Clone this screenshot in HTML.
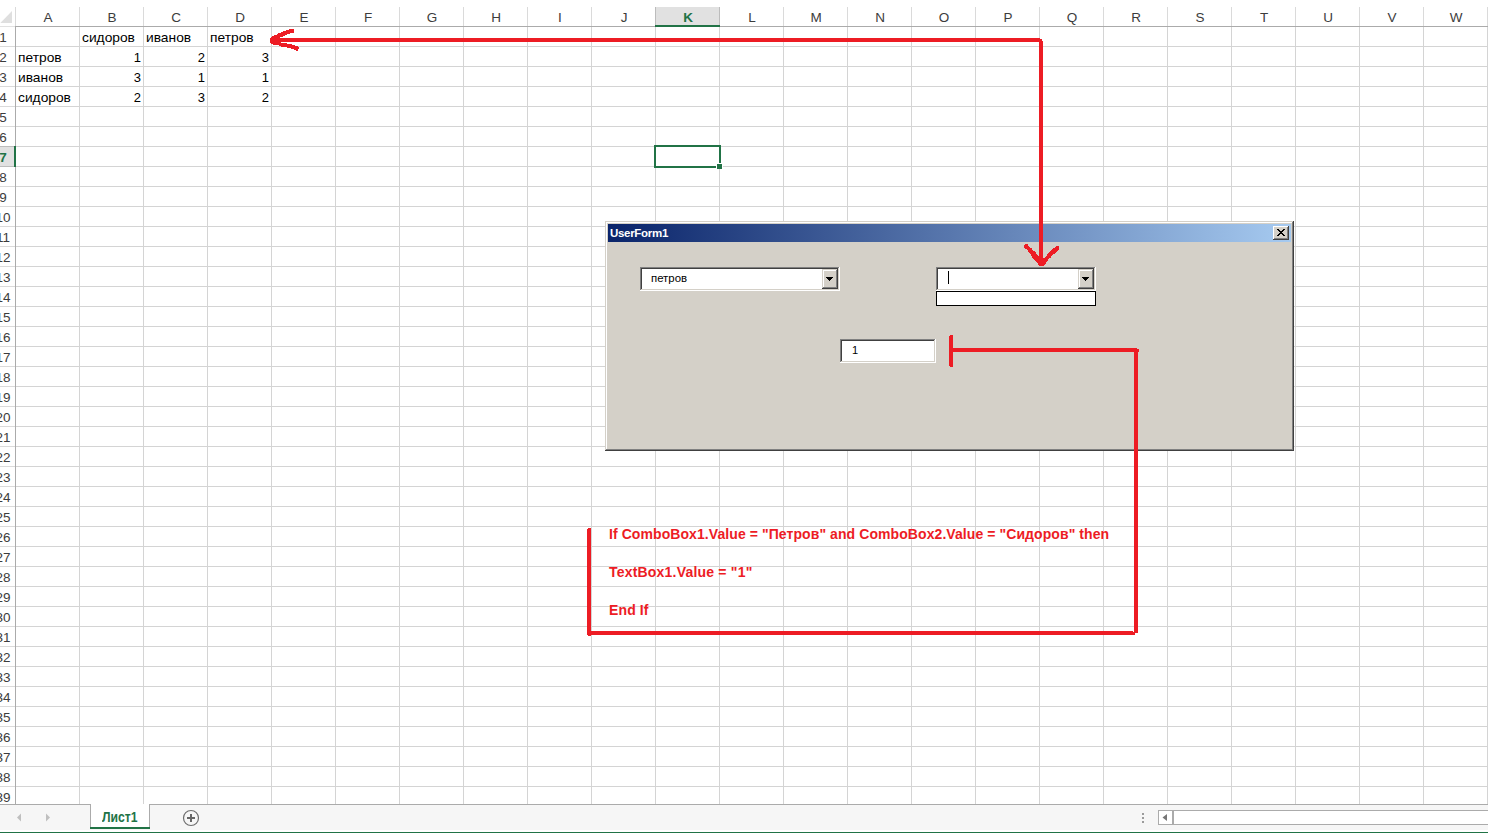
<!DOCTYPE html><html><head><meta charset="utf-8"><style>
html,body{margin:0;padding:0}
body{width:1488px;height:833px;overflow:hidden;position:relative;background:#fff;font-family:"Liberation Sans",sans-serif}
.a{position:absolute}
.t{position:absolute;white-space:pre;line-height:1}
.ch{position:absolute;top:8px;height:19px;width:64px;text-align:center;font-size:13.5px;color:#3c3c3c;line-height:19px}
.rh{position:absolute;left:-11px;width:26px;text-align:center;font-size:13.5px;color:#262626;line-height:20px;height:20px}
.c{position:absolute;font-size:13px;color:#000;white-space:pre;line-height:20px;height:20px}
</style></head><body>
<div class="a" style="left:655px;top:7px;width:64px;height:19px;background:#e1e1e1;"></div>
<div class="a" style="left:79px;top:7px;width:1px;height:19px;background:#dadada;"></div>
<div class="a" style="left:143px;top:7px;width:1px;height:19px;background:#dadada;"></div>
<div class="a" style="left:207px;top:7px;width:1px;height:19px;background:#dadada;"></div>
<div class="a" style="left:271px;top:7px;width:1px;height:19px;background:#dadada;"></div>
<div class="a" style="left:335px;top:7px;width:1px;height:19px;background:#dadada;"></div>
<div class="a" style="left:399px;top:7px;width:1px;height:19px;background:#dadada;"></div>
<div class="a" style="left:463px;top:7px;width:1px;height:19px;background:#dadada;"></div>
<div class="a" style="left:527px;top:7px;width:1px;height:19px;background:#dadada;"></div>
<div class="a" style="left:591px;top:7px;width:1px;height:19px;background:#dadada;"></div>
<div class="a" style="left:655px;top:7px;width:1px;height:19px;background:#bcbcbc;"></div>
<div class="a" style="left:719px;top:7px;width:1px;height:19px;background:#bcbcbc;"></div>
<div class="a" style="left:783px;top:7px;width:1px;height:19px;background:#dadada;"></div>
<div class="a" style="left:847px;top:7px;width:1px;height:19px;background:#dadada;"></div>
<div class="a" style="left:911px;top:7px;width:1px;height:19px;background:#dadada;"></div>
<div class="a" style="left:975px;top:7px;width:1px;height:19px;background:#dadada;"></div>
<div class="a" style="left:1039px;top:7px;width:1px;height:19px;background:#dadada;"></div>
<div class="a" style="left:1103px;top:7px;width:1px;height:19px;background:#dadada;"></div>
<div class="a" style="left:1167px;top:7px;width:1px;height:19px;background:#dadada;"></div>
<div class="a" style="left:1231px;top:7px;width:1px;height:19px;background:#dadada;"></div>
<div class="a" style="left:1295px;top:7px;width:1px;height:19px;background:#dadada;"></div>
<div class="a" style="left:1359px;top:7px;width:1px;height:19px;background:#dadada;"></div>
<div class="a" style="left:1423px;top:7px;width:1px;height:19px;background:#dadada;"></div>
<div class="a" style="left:1487px;top:7px;width:1px;height:19px;background:#dadada;"></div>
<div class="ch" style="left:16px;color:#3c3c3c">A</div>
<div class="ch" style="left:80px;color:#3c3c3c">B</div>
<div class="ch" style="left:144px;color:#3c3c3c">C</div>
<div class="ch" style="left:208px;color:#3c3c3c">D</div>
<div class="ch" style="left:272px;color:#3c3c3c">E</div>
<div class="ch" style="left:336px;color:#3c3c3c">F</div>
<div class="ch" style="left:400px;color:#3c3c3c">G</div>
<div class="ch" style="left:464px;color:#3c3c3c">H</div>
<div class="ch" style="left:528px;color:#3c3c3c">I</div>
<div class="ch" style="left:592px;color:#3c3c3c">J</div>
<div class="ch" style="left:656px;color:#217346;font-weight:bold">K</div>
<div class="ch" style="left:720px;color:#3c3c3c">L</div>
<div class="ch" style="left:784px;color:#3c3c3c">M</div>
<div class="ch" style="left:848px;color:#3c3c3c">N</div>
<div class="ch" style="left:912px;color:#3c3c3c">O</div>
<div class="ch" style="left:976px;color:#3c3c3c">P</div>
<div class="ch" style="left:1040px;color:#3c3c3c">Q</div>
<div class="ch" style="left:1104px;color:#3c3c3c">R</div>
<div class="ch" style="left:1168px;color:#3c3c3c">S</div>
<div class="ch" style="left:1232px;color:#3c3c3c">T</div>
<div class="ch" style="left:1296px;color:#3c3c3c">U</div>
<div class="ch" style="left:1360px;color:#3c3c3c">V</div>
<div class="ch" style="left:1424px;color:#3c3c3c">W</div>
<div class="a" style="left:0px;top:26px;width:15px;height:1px;background:#e1e1e1;"></div>
<div class="a" style="left:15px;top:26px;width:1473px;height:1px;background:#ababab;"></div>
<div class="a" style="left:655px;top:25px;width:65px;height:2px;background:#217346;"></div>
<svg class="a" style="left:0;top:0" width="15" height="26"><polygon points="0.3,23 12,11 12,23" fill="#dfdfdf"/></svg>
<div class="a" style="left:0px;top:147px;width:14px;height:19px;background:#e1e1e1;"></div>
<div class="a" style="left:0px;top:46px;width:15px;height:1px;background:#dadada;"></div>
<div class="a" style="left:0px;top:66px;width:15px;height:1px;background:#dadada;"></div>
<div class="a" style="left:0px;top:86px;width:15px;height:1px;background:#dadada;"></div>
<div class="a" style="left:0px;top:106px;width:15px;height:1px;background:#dadada;"></div>
<div class="a" style="left:0px;top:126px;width:15px;height:1px;background:#dadada;"></div>
<div class="a" style="left:0px;top:146px;width:15px;height:1px;background:#bcbcbc;"></div>
<div class="a" style="left:0px;top:166px;width:15px;height:1px;background:#bcbcbc;"></div>
<div class="a" style="left:0px;top:186px;width:15px;height:1px;background:#dadada;"></div>
<div class="a" style="left:0px;top:206px;width:15px;height:1px;background:#dadada;"></div>
<div class="a" style="left:0px;top:226px;width:15px;height:1px;background:#dadada;"></div>
<div class="a" style="left:0px;top:246px;width:15px;height:1px;background:#dadada;"></div>
<div class="a" style="left:0px;top:266px;width:15px;height:1px;background:#dadada;"></div>
<div class="a" style="left:0px;top:286px;width:15px;height:1px;background:#dadada;"></div>
<div class="a" style="left:0px;top:306px;width:15px;height:1px;background:#dadada;"></div>
<div class="a" style="left:0px;top:326px;width:15px;height:1px;background:#dadada;"></div>
<div class="a" style="left:0px;top:346px;width:15px;height:1px;background:#dadada;"></div>
<div class="a" style="left:0px;top:366px;width:15px;height:1px;background:#dadada;"></div>
<div class="a" style="left:0px;top:386px;width:15px;height:1px;background:#dadada;"></div>
<div class="a" style="left:0px;top:406px;width:15px;height:1px;background:#dadada;"></div>
<div class="a" style="left:0px;top:426px;width:15px;height:1px;background:#dadada;"></div>
<div class="a" style="left:0px;top:446px;width:15px;height:1px;background:#dadada;"></div>
<div class="a" style="left:0px;top:466px;width:15px;height:1px;background:#dadada;"></div>
<div class="a" style="left:0px;top:486px;width:15px;height:1px;background:#dadada;"></div>
<div class="a" style="left:0px;top:506px;width:15px;height:1px;background:#dadada;"></div>
<div class="a" style="left:0px;top:526px;width:15px;height:1px;background:#dadada;"></div>
<div class="a" style="left:0px;top:546px;width:15px;height:1px;background:#dadada;"></div>
<div class="a" style="left:0px;top:566px;width:15px;height:1px;background:#dadada;"></div>
<div class="a" style="left:0px;top:586px;width:15px;height:1px;background:#dadada;"></div>
<div class="a" style="left:0px;top:606px;width:15px;height:1px;background:#dadada;"></div>
<div class="a" style="left:0px;top:626px;width:15px;height:1px;background:#dadada;"></div>
<div class="a" style="left:0px;top:646px;width:15px;height:1px;background:#dadada;"></div>
<div class="a" style="left:0px;top:666px;width:15px;height:1px;background:#dadada;"></div>
<div class="a" style="left:0px;top:686px;width:15px;height:1px;background:#dadada;"></div>
<div class="a" style="left:0px;top:706px;width:15px;height:1px;background:#dadada;"></div>
<div class="a" style="left:0px;top:726px;width:15px;height:1px;background:#dadada;"></div>
<div class="a" style="left:0px;top:746px;width:15px;height:1px;background:#dadada;"></div>
<div class="a" style="left:0px;top:766px;width:15px;height:1px;background:#dadada;"></div>
<div class="a" style="left:0px;top:786px;width:15px;height:1px;background:#dadada;"></div>
<div class="a" style="left:0px;top:806px;width:15px;height:1px;background:#dadada;"></div>
<div class="a" style="left:15px;top:7px;width:1px;height:19px;background:#dadada;"></div>
<div class="a" style="left:15px;top:26px;width:1px;height:778px;background:#ababab;"></div>
<div class="a" style="left:14px;top:146px;width:2px;height:21px;background:#217346;"></div>
<div class="rh" style="left:-10px;top:28px;color:#3c3c3c">1</div>
<div class="rh" style="left:-10px;top:48px;color:#3c3c3c">2</div>
<div class="rh" style="left:-10px;top:68px;color:#3c3c3c">3</div>
<div class="rh" style="left:-10px;top:88px;color:#3c3c3c">4</div>
<div class="rh" style="left:-10px;top:108px;color:#3c3c3c">5</div>
<div class="rh" style="left:-10px;top:128px;color:#3c3c3c">6</div>
<div class="rh" style="left:-10px;top:148px;color:#217346;font-weight:bold">7</div>
<div class="rh" style="left:-10px;top:168px;color:#3c3c3c">8</div>
<div class="rh" style="left:-10px;top:188px;color:#3c3c3c">9</div>
<div class="rh" style="left:-10px;top:208px;color:#3c3c3c">10</div>
<div class="rh" style="left:-10px;top:228px;color:#3c3c3c">11</div>
<div class="rh" style="left:-10px;top:248px;color:#3c3c3c">12</div>
<div class="rh" style="left:-10px;top:268px;color:#3c3c3c">13</div>
<div class="rh" style="left:-10px;top:288px;color:#3c3c3c">14</div>
<div class="rh" style="left:-10px;top:308px;color:#3c3c3c">15</div>
<div class="rh" style="left:-10px;top:328px;color:#3c3c3c">16</div>
<div class="rh" style="left:-10px;top:348px;color:#3c3c3c">17</div>
<div class="rh" style="left:-10px;top:368px;color:#3c3c3c">18</div>
<div class="rh" style="left:-10px;top:388px;color:#3c3c3c">19</div>
<div class="rh" style="left:-10px;top:408px;color:#3c3c3c">20</div>
<div class="rh" style="left:-10px;top:428px;color:#3c3c3c">21</div>
<div class="rh" style="left:-10px;top:448px;color:#3c3c3c">22</div>
<div class="rh" style="left:-10px;top:468px;color:#3c3c3c">23</div>
<div class="rh" style="left:-10px;top:488px;color:#3c3c3c">24</div>
<div class="rh" style="left:-10px;top:508px;color:#3c3c3c">25</div>
<div class="rh" style="left:-10px;top:528px;color:#3c3c3c">26</div>
<div class="rh" style="left:-10px;top:548px;color:#3c3c3c">27</div>
<div class="rh" style="left:-10px;top:568px;color:#3c3c3c">28</div>
<div class="rh" style="left:-10px;top:588px;color:#3c3c3c">29</div>
<div class="rh" style="left:-10px;top:608px;color:#3c3c3c">30</div>
<div class="rh" style="left:-10px;top:628px;color:#3c3c3c">31</div>
<div class="rh" style="left:-10px;top:648px;color:#3c3c3c">32</div>
<div class="rh" style="left:-10px;top:668px;color:#3c3c3c">33</div>
<div class="rh" style="left:-10px;top:688px;color:#3c3c3c">34</div>
<div class="rh" style="left:-10px;top:708px;color:#3c3c3c">35</div>
<div class="rh" style="left:-10px;top:728px;color:#3c3c3c">36</div>
<div class="rh" style="left:-10px;top:748px;color:#3c3c3c">37</div>
<div class="rh" style="left:-10px;top:768px;color:#3c3c3c">38</div>
<div class="rh" style="left:-10px;top:788px;color:#3c3c3c">39</div>
<div class="a" style="left:79px;top:27px;width:1px;height:777px;background:#d4d4d4;"></div>
<div class="a" style="left:143px;top:27px;width:1px;height:777px;background:#d4d4d4;"></div>
<div class="a" style="left:207px;top:27px;width:1px;height:777px;background:#d4d4d4;"></div>
<div class="a" style="left:271px;top:27px;width:1px;height:777px;background:#d4d4d4;"></div>
<div class="a" style="left:335px;top:27px;width:1px;height:777px;background:#d4d4d4;"></div>
<div class="a" style="left:399px;top:27px;width:1px;height:777px;background:#d4d4d4;"></div>
<div class="a" style="left:463px;top:27px;width:1px;height:777px;background:#d4d4d4;"></div>
<div class="a" style="left:527px;top:27px;width:1px;height:777px;background:#d4d4d4;"></div>
<div class="a" style="left:591px;top:27px;width:1px;height:777px;background:#d4d4d4;"></div>
<div class="a" style="left:655px;top:27px;width:1px;height:777px;background:#d4d4d4;"></div>
<div class="a" style="left:719px;top:27px;width:1px;height:777px;background:#d4d4d4;"></div>
<div class="a" style="left:783px;top:27px;width:1px;height:777px;background:#d4d4d4;"></div>
<div class="a" style="left:847px;top:27px;width:1px;height:777px;background:#d4d4d4;"></div>
<div class="a" style="left:911px;top:27px;width:1px;height:777px;background:#d4d4d4;"></div>
<div class="a" style="left:975px;top:27px;width:1px;height:777px;background:#d4d4d4;"></div>
<div class="a" style="left:1039px;top:27px;width:1px;height:777px;background:#d4d4d4;"></div>
<div class="a" style="left:1103px;top:27px;width:1px;height:777px;background:#d4d4d4;"></div>
<div class="a" style="left:1167px;top:27px;width:1px;height:777px;background:#d4d4d4;"></div>
<div class="a" style="left:1231px;top:27px;width:1px;height:777px;background:#d4d4d4;"></div>
<div class="a" style="left:1295px;top:27px;width:1px;height:777px;background:#d4d4d4;"></div>
<div class="a" style="left:1359px;top:27px;width:1px;height:777px;background:#d4d4d4;"></div>
<div class="a" style="left:1423px;top:27px;width:1px;height:777px;background:#d4d4d4;"></div>
<div class="a" style="left:1487px;top:27px;width:1px;height:777px;background:#d4d4d4;"></div>
<div class="a" style="left:16px;top:46px;width:1472px;height:1px;background:#d4d4d4;"></div>
<div class="a" style="left:16px;top:66px;width:1472px;height:1px;background:#d4d4d4;"></div>
<div class="a" style="left:16px;top:86px;width:1472px;height:1px;background:#d4d4d4;"></div>
<div class="a" style="left:16px;top:106px;width:1472px;height:1px;background:#d4d4d4;"></div>
<div class="a" style="left:16px;top:126px;width:1472px;height:1px;background:#d4d4d4;"></div>
<div class="a" style="left:16px;top:146px;width:1472px;height:1px;background:#d4d4d4;"></div>
<div class="a" style="left:16px;top:166px;width:1472px;height:1px;background:#d4d4d4;"></div>
<div class="a" style="left:16px;top:186px;width:1472px;height:1px;background:#d4d4d4;"></div>
<div class="a" style="left:16px;top:206px;width:1472px;height:1px;background:#d4d4d4;"></div>
<div class="a" style="left:16px;top:226px;width:1472px;height:1px;background:#d4d4d4;"></div>
<div class="a" style="left:16px;top:246px;width:1472px;height:1px;background:#d4d4d4;"></div>
<div class="a" style="left:16px;top:266px;width:1472px;height:1px;background:#d4d4d4;"></div>
<div class="a" style="left:16px;top:286px;width:1472px;height:1px;background:#d4d4d4;"></div>
<div class="a" style="left:16px;top:306px;width:1472px;height:1px;background:#d4d4d4;"></div>
<div class="a" style="left:16px;top:326px;width:1472px;height:1px;background:#d4d4d4;"></div>
<div class="a" style="left:16px;top:346px;width:1472px;height:1px;background:#d4d4d4;"></div>
<div class="a" style="left:16px;top:366px;width:1472px;height:1px;background:#d4d4d4;"></div>
<div class="a" style="left:16px;top:386px;width:1472px;height:1px;background:#d4d4d4;"></div>
<div class="a" style="left:16px;top:406px;width:1472px;height:1px;background:#d4d4d4;"></div>
<div class="a" style="left:16px;top:426px;width:1472px;height:1px;background:#d4d4d4;"></div>
<div class="a" style="left:16px;top:446px;width:1472px;height:1px;background:#d4d4d4;"></div>
<div class="a" style="left:16px;top:466px;width:1472px;height:1px;background:#d4d4d4;"></div>
<div class="a" style="left:16px;top:486px;width:1472px;height:1px;background:#d4d4d4;"></div>
<div class="a" style="left:16px;top:506px;width:1472px;height:1px;background:#d4d4d4;"></div>
<div class="a" style="left:16px;top:526px;width:1472px;height:1px;background:#d4d4d4;"></div>
<div class="a" style="left:16px;top:546px;width:1472px;height:1px;background:#d4d4d4;"></div>
<div class="a" style="left:16px;top:566px;width:1472px;height:1px;background:#d4d4d4;"></div>
<div class="a" style="left:16px;top:586px;width:1472px;height:1px;background:#d4d4d4;"></div>
<div class="a" style="left:16px;top:606px;width:1472px;height:1px;background:#d4d4d4;"></div>
<div class="a" style="left:16px;top:626px;width:1472px;height:1px;background:#d4d4d4;"></div>
<div class="a" style="left:16px;top:646px;width:1472px;height:1px;background:#d4d4d4;"></div>
<div class="a" style="left:16px;top:666px;width:1472px;height:1px;background:#d4d4d4;"></div>
<div class="a" style="left:16px;top:686px;width:1472px;height:1px;background:#d4d4d4;"></div>
<div class="a" style="left:16px;top:706px;width:1472px;height:1px;background:#d4d4d4;"></div>
<div class="a" style="left:16px;top:726px;width:1472px;height:1px;background:#d4d4d4;"></div>
<div class="a" style="left:16px;top:746px;width:1472px;height:1px;background:#d4d4d4;"></div>
<div class="a" style="left:16px;top:766px;width:1472px;height:1px;background:#d4d4d4;"></div>
<div class="a" style="left:16px;top:786px;width:1472px;height:1px;background:#d4d4d4;"></div>
<div class="c" style="left:82px;top:28px;transform:scaleX(1.06);transform-origin:0 0">сидоров</div>
<div class="c" style="left:146px;top:28px;transform:scaleX(1.06);transform-origin:0 0">иванов</div>
<div class="c" style="left:210px;top:28px;transform:scaleX(1.06);transform-origin:0 0">петров</div>
<div class="c" style="left:18px;top:48px;transform:scaleX(1.06);transform-origin:0 0">петров</div>
<div class="c" style="left:79px;width:62px;text-align:right;top:48px">1</div>
<div class="c" style="left:143px;width:62px;text-align:right;top:48px">2</div>
<div class="c" style="left:207px;width:62px;text-align:right;top:48px">3</div>
<div class="c" style="left:18px;top:68px;transform:scaleX(1.06);transform-origin:0 0">иванов</div>
<div class="c" style="left:79px;width:62px;text-align:right;top:68px">3</div>
<div class="c" style="left:143px;width:62px;text-align:right;top:68px">1</div>
<div class="c" style="left:207px;width:62px;text-align:right;top:68px">1</div>
<div class="c" style="left:18px;top:88px;transform:scaleX(1.06);transform-origin:0 0">сидоров</div>
<div class="c" style="left:79px;width:62px;text-align:right;top:88px">2</div>
<div class="c" style="left:143px;width:62px;text-align:right;top:88px">3</div>
<div class="c" style="left:207px;width:62px;text-align:right;top:88px">2</div>
<div class="a" style="left:654px;top:145px;width:67px;height:2px;background:#217346;"></div>
<div class="a" style="left:654px;top:145px;width:2px;height:23px;background:#217346;"></div>
<div class="a" style="left:654px;top:166px;width:62px;height:2px;background:#217346;"></div>
<div class="a" style="left:719px;top:145px;width:2px;height:18px;background:#217346;"></div>
<div class="a" style="left:716px;top:163px;width:7px;height:6px;background:#fff;"></div>
<div class="a" style="left:717px;top:164px;width:5px;height:5px;background:#217346;"></div>
<div class="a" style="left:605px;top:221px;width:689px;height:230px;background:#404040;"></div>
<div class="a" style="left:605px;top:221px;width:688px;height:229px;background:#d4d0c8;"></div>
<div class="a" style="left:606px;top:222px;width:687px;height:228px;background:#808080;"></div>
<div class="a" style="left:606px;top:222px;width:686px;height:227px;background:#ffffff;"></div>
<div class="a" style="left:607px;top:223px;width:685px;height:226px;background:#d4d0c8;"></div>
<div class="a" style="left:608px;top:224px;width:683px;height:18px;background:linear-gradient(to right,#0a246a,#a6caf0);"></div>
<div class="t" style="left:610px;top:228px;font-size:11.5px;font-weight:bold;color:#fff;letter-spacing:-0.3px">UserForm1</div>
<div class="a" style="left:1273px;top:226px;width:16px;height:14px;background:#404040;"></div>
<div class="a" style="left:1273px;top:226px;width:15px;height:13px;background:#ffffff;"></div>
<div class="a" style="left:1274px;top:227px;width:14px;height:12px;background:#808080;"></div>
<div class="a" style="left:1274px;top:227px;width:13px;height:11px;background:#d4d0c8;"></div>
<div class="a" style="left:1277px;top:229px;width:1px;height:1px;background:#000;"></div>
<div class="a" style="left:1278px;top:229px;width:1px;height:1px;background:#000;"></div>
<div class="a" style="left:1283px;top:229px;width:1px;height:1px;background:#000;"></div>
<div class="a" style="left:1284px;top:229px;width:1px;height:1px;background:#000;"></div>
<div class="a" style="left:1278px;top:230px;width:1px;height:1px;background:#000;"></div>
<div class="a" style="left:1279px;top:230px;width:1px;height:1px;background:#000;"></div>
<div class="a" style="left:1282px;top:230px;width:1px;height:1px;background:#000;"></div>
<div class="a" style="left:1283px;top:230px;width:1px;height:1px;background:#000;"></div>
<div class="a" style="left:1279px;top:231px;width:1px;height:1px;background:#000;"></div>
<div class="a" style="left:1280px;top:231px;width:1px;height:1px;background:#000;"></div>
<div class="a" style="left:1281px;top:231px;width:1px;height:1px;background:#000;"></div>
<div class="a" style="left:1282px;top:231px;width:1px;height:1px;background:#000;"></div>
<div class="a" style="left:1280px;top:232px;width:1px;height:1px;background:#000;"></div>
<div class="a" style="left:1281px;top:232px;width:1px;height:1px;background:#000;"></div>
<div class="a" style="left:1279px;top:233px;width:1px;height:1px;background:#000;"></div>
<div class="a" style="left:1280px;top:233px;width:1px;height:1px;background:#000;"></div>
<div class="a" style="left:1281px;top:233px;width:1px;height:1px;background:#000;"></div>
<div class="a" style="left:1282px;top:233px;width:1px;height:1px;background:#000;"></div>
<div class="a" style="left:1278px;top:234px;width:1px;height:1px;background:#000;"></div>
<div class="a" style="left:1279px;top:234px;width:1px;height:1px;background:#000;"></div>
<div class="a" style="left:1282px;top:234px;width:1px;height:1px;background:#000;"></div>
<div class="a" style="left:1283px;top:234px;width:1px;height:1px;background:#000;"></div>
<div class="a" style="left:1277px;top:235px;width:1px;height:1px;background:#000;"></div>
<div class="a" style="left:1278px;top:235px;width:1px;height:1px;background:#000;"></div>
<div class="a" style="left:1283px;top:235px;width:1px;height:1px;background:#000;"></div>
<div class="a" style="left:1284px;top:235px;width:1px;height:1px;background:#000;"></div>
<div class="a" style="left:640px;top:267px;width:200px;height:24px;background:#ffffff;"></div>
<div class="a" style="left:640px;top:267px;width:199px;height:23px;background:#808080;"></div>
<div class="a" style="left:641px;top:268px;width:198px;height:22px;background:#d4d0c8;"></div>
<div class="a" style="left:641px;top:268px;width:197px;height:21px;background:#404040;"></div>
<div class="a" style="left:642px;top:269px;width:196px;height:20px;background:#ffffff;"></div>
<div class="a" style="left:822px;top:269px;width:16px;height:20px;background:#404040;"></div>
<div class="a" style="left:822px;top:269px;width:15px;height:19px;background:#d4d0c8;"></div>
<div class="a" style="left:823px;top:270px;width:14px;height:18px;background:#808080;"></div>
<div class="a" style="left:823px;top:270px;width:13px;height:17px;background:#ffffff;"></div>
<div class="a" style="left:824px;top:271px;width:12px;height:16px;background:#d4d0c8;"></div>
<div class="a" style="left:826px;top:277px;width:7px;height:1px;background:#000;"></div>
<div class="a" style="left:827px;top:278px;width:5px;height:1px;background:#000;"></div>
<div class="a" style="left:828px;top:279px;width:3px;height:1px;background:#000;"></div>
<div class="a" style="left:829px;top:280px;width:1px;height:1px;background:#000;"></div>
<div class="t" style="left:651px;top:273px;font-size:11.4px;color:#000">петров</div>
<div class="a" style="left:936px;top:267px;width:160px;height:24px;background:#ffffff;"></div>
<div class="a" style="left:936px;top:267px;width:159px;height:23px;background:#808080;"></div>
<div class="a" style="left:937px;top:268px;width:158px;height:22px;background:#d4d0c8;"></div>
<div class="a" style="left:937px;top:268px;width:157px;height:21px;background:#404040;"></div>
<div class="a" style="left:938px;top:269px;width:156px;height:20px;background:#ffffff;"></div>
<div class="a" style="left:1078px;top:269px;width:16px;height:20px;background:#404040;"></div>
<div class="a" style="left:1078px;top:269px;width:15px;height:19px;background:#d4d0c8;"></div>
<div class="a" style="left:1079px;top:270px;width:14px;height:18px;background:#808080;"></div>
<div class="a" style="left:1079px;top:270px;width:13px;height:17px;background:#ffffff;"></div>
<div class="a" style="left:1080px;top:271px;width:12px;height:16px;background:#d4d0c8;"></div>
<div class="a" style="left:1082px;top:277px;width:7px;height:1px;background:#000;"></div>
<div class="a" style="left:1083px;top:278px;width:5px;height:1px;background:#000;"></div>
<div class="a" style="left:1084px;top:279px;width:3px;height:1px;background:#000;"></div>
<div class="a" style="left:1085px;top:280px;width:1px;height:1px;background:#000;"></div>
<div class="a" style="left:948px;top:271px;width:1px;height:13px;background:#000;"></div>
<div class="a" style="left:936px;top:291px;width:160px;height:15px;background:#000;"></div>
<div class="a" style="left:937px;top:292px;width:158px;height:13px;background:#fff;"></div>
<div class="a" style="left:840px;top:339px;width:96px;height:24px;background:#ffffff;"></div>
<div class="a" style="left:840px;top:339px;width:95px;height:23px;background:#808080;"></div>
<div class="a" style="left:841px;top:340px;width:94px;height:22px;background:#d4d0c8;"></div>
<div class="a" style="left:841px;top:340px;width:93px;height:21px;background:#404040;"></div>
<div class="a" style="left:842px;top:341px;width:92px;height:20px;background:#ffffff;"></div>
<div class="t" style="left:852px;top:345px;font-size:11px;color:#000">1</div>
<div class="t" style="left:609px;top:527px;font-size:14px;font-weight:bold;letter-spacing:0.08px;color:#ed1c24">If ComboBox1.Value = "Петров" and ComboBox2.Value = "Сидоров" then</div>
<div class="t" style="left:609px;top:565px;font-size:14px;font-weight:bold;letter-spacing:0.2px;color:#ed1c24">TextBox1.Value = "1"</div>
<div class="t" style="left:609px;top:603px;font-size:14px;font-weight:bold;letter-spacing:0.12px;color:#ed1c24">End If</div>
<svg class="a" style="left:0;top:0" width="1488" height="833" shape-rendering="crispEdges">
<g fill="#ed1c24" stroke="none">
<rect x="289" y="29" width="5" height="1"/>
<rect x="286" y="30" width="8" height="1"/>
<rect x="283" y="31" width="11" height="1"/>
<rect x="281" y="32" width="13" height="1"/>
<rect x="278" y="33" width="12" height="1"/>
<rect x="277" y="34" width="10" height="1"/>
<rect x="274" y="35" width="11" height="1"/>
<rect x="272" y="36" width="11" height="1"/>
<rect x="271" y="37" width="9" height="1"/>
<rect x="270" y="42" width="11" height="1"/>
<rect x="271" y="43" width="16" height="1"/>
<rect x="273" y="44" width="19" height="1"/>
<rect x="279" y="45" width="16" height="1"/>
<rect x="281" y="46" width="17" height="1"/>
<rect x="287" y="47" width="12" height="1"/>
<rect x="291" y="48" width="8" height="1"/>
<rect x="294" y="49" width="4" height="1"/>
<rect x="296" y="50" width="2" height="1"/>
<rect x="270" y="38" width="770" height="4"/>
<rect x="1040" y="39" width="2" height="1"/>
<rect x="1040" y="40" width="2" height="1"/>
<rect x="1039" y="41" width="4" height="219"/>
<rect x="1025" y="244" width="3" height="1"/>
<rect x="1024" y="245" width="4" height="1"/>
<rect x="1024" y="246" width="5" height="1"/>
<rect x="1024" y="247" width="6" height="1"/>
<rect x="1025" y="248" width="7" height="1"/>
<rect x="1027" y="249" width="5" height="1"/>
<rect x="1028" y="250" width="5" height="1"/>
<rect x="1028" y="251" width="7" height="1"/>
<rect x="1029" y="252" width="7" height="1"/>
<rect x="1030" y="253" width="6" height="1"/>
<rect x="1031" y="254" width="6" height="1"/>
<rect x="1031" y="255" width="7" height="1"/>
<rect x="1032" y="256" width="7" height="1"/>
<rect x="1032" y="257" width="11" height="1"/>
<rect x="1033" y="258" width="16" height="1"/>
<rect x="1034" y="259" width="14" height="1"/>
<rect x="1035" y="260" width="13" height="1"/>
<rect x="1036" y="261" width="11" height="1"/>
<rect x="1037" y="262" width="9" height="1"/>
<rect x="1038" y="263" width="8" height="1"/>
<rect x="1038" y="264" width="7" height="1"/>
<rect x="1039" y="265" width="5" height="1"/>
<rect x="1056" y="246" width="3" height="1"/>
<rect x="1055" y="247" width="4" height="1"/>
<rect x="1053" y="248" width="6" height="1"/>
<rect x="1052" y="249" width="7" height="1"/>
<rect x="1051" y="250" width="7" height="1"/>
<rect x="1050" y="251" width="7" height="1"/>
<rect x="1049" y="252" width="7" height="1"/>
<rect x="1048" y="253" width="7" height="1"/>
<rect x="1047" y="254" width="6" height="1"/>
<rect x="1047" y="255" width="5" height="1"/>
<rect x="1046" y="256" width="5" height="1"/>
<rect x="1045" y="257" width="6" height="1"/>
<rect x="950" y="335" width="3" height="32"/>
<rect x="949" y="336" width="1" height="30"/>
<rect x="953" y="348" width="183" height="4"/>
<rect x="1134" y="349" width="4" height="284"/>
<rect x="1136" y="348" width="1" height="1"/>
<rect x="1138" y="349" width="1" height="1"/>
<rect x="1138" y="350" width="1" height="1"/>
<rect x="1138" y="351" width="1" height="1"/>
<rect x="587" y="529" width="4" height="103"/>
<rect x="588" y="528" width="3" height="1"/>
<rect x="587" y="631" width="546" height="4"/>
<rect x="588" y="635" width="3" height="1"/>
<rect x="1133" y="632" width="1" height="1"/>
<rect x="1133" y="633" width="2" height="1"/>
<rect x="1133" y="634" width="2" height="1"/>
</g></svg>
<div class="a" style="left:0px;top:804px;width:1488px;height:1px;background:#ababab;"></div>
<div class="a" style="left:0px;top:805px;width:1488px;height:25px;background:#f6f6f6;"></div>
<div class="a" style="left:0px;top:830px;width:1488px;height:2px;background:#ffffff;"></div>
<div class="a" style="left:0px;top:832px;width:1488px;height:1px;background:#217346;"></div>
<svg class="a" style="left:16px;top:813px" width="40" height="9"><path d="M1,4.5 L5,0.5 L5,8.5z" fill="#bfbfbf"/><path d="M30,0.5 L34,4.5 L30,8.5z" fill="#bfbfbf"/></svg>
<div class="a" style="left:90px;top:804px;width:60px;height:25px;background:#ababab;"></div>
<div class="a" style="left:91px;top:804px;width:58px;height:23px;background:#ffffff;"></div>
<div class="a" style="left:90px;top:827px;width:60px;height:2px;background:#217346;"></div>
<div class="t" style="left:102px;top:810px;font-size:14px;font-weight:bold;transform:scaleX(0.87);transform-origin:0 0;color:#217346">Лист1</div>
<svg class="a" style="left:182px;top:809px" width="18" height="18"><circle cx="9" cy="9" r="7.5" fill="none" stroke="#6e6e6e" stroke-width="1.2"/><path d="M9,5v8M5,9h8" stroke="#666" stroke-width="2"/></svg>
<div class="a" style="left:1142px;top:813px;width:2px;height:2px;background:#9b9b9b;"></div>
<div class="a" style="left:1142px;top:817px;width:2px;height:2px;background:#9b9b9b;"></div>
<div class="a" style="left:1142px;top:821px;width:2px;height:2px;background:#9b9b9b;"></div>
<div class="a" style="left:1158px;top:810px;width:330px;height:15px;background:#ababab;"></div>
<div class="a" style="left:1159px;top:811px;width:329px;height:13px;background:#ffffff;"></div>
<div class="a" style="left:1172px;top:811px;width:2px;height:13px;background:#ababab;"></div>
<svg class="a" style="left:1162px;top:814px" width="6" height="8"><path d="M0.5,3.5 L5,0 L5,7z" fill="#777"/></svg>
</body></html>
